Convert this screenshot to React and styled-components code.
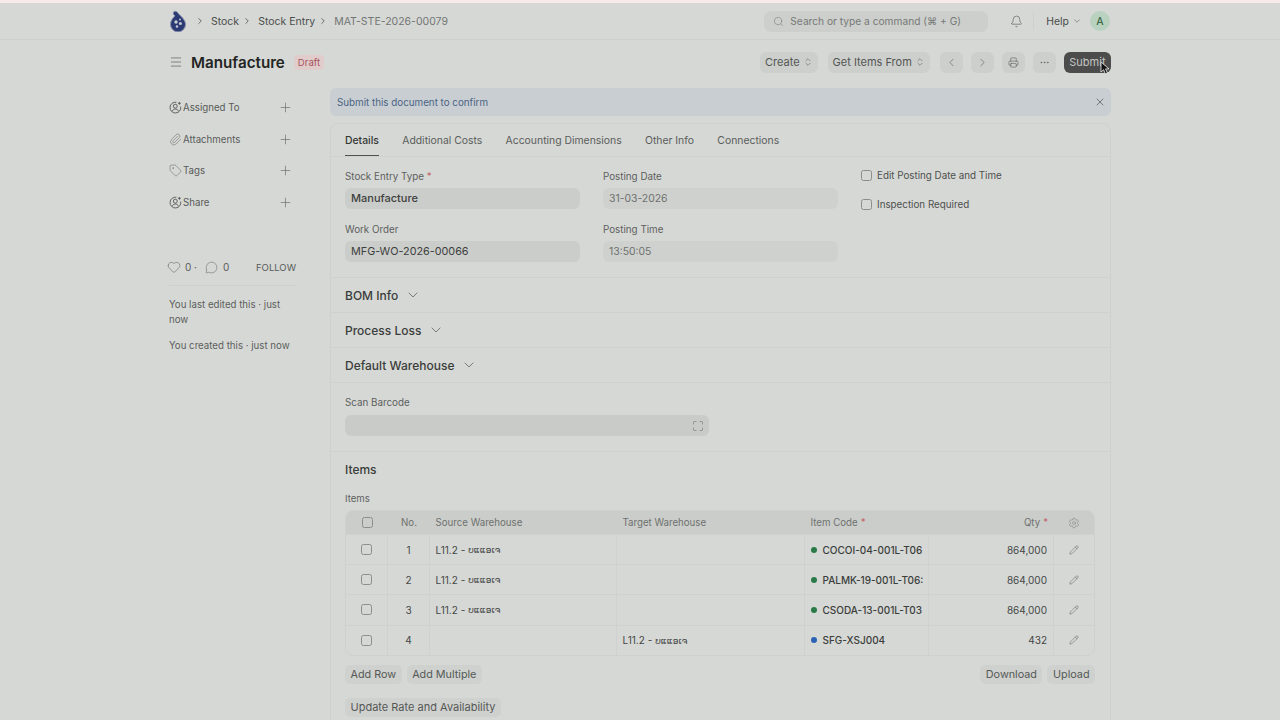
import React from 'react';
import styled, { createGlobalStyle } from 'styled-components';
import { Bell, ChevronDown, ChevronLeft, ChevronRight, ChevronsUpDown, Ellipsis, Heart, Maximize, Menu, MessageCircle, Paperclip, Pencil, Plus, Printer, Search, Settings, Tag, X } from 'lucide-react';

const Global = createGlobalStyle`
  html, body { margin: 0; padding: 0; background: #d6d8d5; height: 720px; overflow: hidden; }
  body { font-family: Inter, "Liberation Sans", "DejaVu Sans", sans-serif; color: #3f4240; -webkit-font-smoothing: antialiased; }
  * { box-sizing: border-box; }
`;
const Page = styled.div`height: 720px; overflow: hidden; border-top: 3px solid #f8e9ea;`;
const Navbar = styled.header`height: 37px; border-bottom: 1px solid #cdd0cd; display: flex; justify-content: center;`;
const Container = styled.div`width: 960px; padding: 0 9px; display: flex; align-items: center;`;
const Logo = styled.svg`width: 18px; height: 22px; margin-right: 8px; flex: none;`;
const Crumb = styled.span`font-size: 10.5px; color: ${p => p.$dim ? '#737674' : '#4b4e4c'}; margin: 0 3px 0 6px;`;
const Spacer = styled.div`flex: 1;`;
const SearchBox = styled.div`width: 224px; height: 21px; border-radius: 7px; background: #cdcfcc; display: flex; align-items: center; gap: 6px; padding: 0 9px; font-size: 10.2px; white-space: nowrap; color: #767977;`;
const NavIcon = styled.div`display: flex; margin-left: 22px; color: #505351;`;
const NavDivider = styled.div`width: 1px; height: 18px; background: #cdd0cd; margin: 0 12px 0 10px;`;
const HelpText = styled.div`font-size: 10.4px; color: #484b49; display: flex; align-items: center; gap: 3px;`;
const Avatar = styled.div`width: 20px; height: 20px; border-radius: 50%; background: #b9d2bf; color: #3d6b4a; font-size: 10.4px; font-weight: 500; display: flex; align-items: center; justify-content: center; margin: 0 1px 0 8px;`;
const PageHead = styled.div`height: 44px; display: flex; justify-content: center;`;
const Title = styled.h1`font-size: 15.2px; font-weight: 600; color: #232523; margin: 0 0 0 8px;`;
const Badge = styled.span`font-size: 9.6px; color: #a8545c; background: #e0cccb; border-radius: 4px; padding: 2px 4px; margin-left: 9px;`;
const Btn = styled.button`height: 21px; border: 0; border-radius: 6px; background: ${p => p.$dark ? '#4b4c4b' : '#cdcfcc'}; color: ${p => p.$dark ? '#c5c7c5' : '#535654'}; font: 400 11px Inter, sans-serif; display: flex; align-items: center; gap: 3px; padding: ${p => p.$icon ? '0' : p.$dark ? '0 5.5px' : '0 5px'}; margin-left: ${p => p.$gap || 8}px; ${p => p.$icon && 'width: 23px; justify-content: center;'} white-space: nowrap; position: relative;`;
const Cursor = styled.svg`position: absolute; right: 0; top: 9px; width: 11px; height: 14px;`;
const Body = styled.div`display: flex; justify-content: center; align-items: flex-start;`;
const Layout = styled.div`width: 960px; padding-left: 9px; display: flex;`;
const Side = styled.aside`width: 161px; flex: none; padding-top: 8px;`;
const SideRow = styled.div`height: 31.5px; width: 124px; display: flex; align-items: center; font-size: 9.7px; color: #585b59;`;
const IconSlot = styled.span`width: 14px; display: flex; flex: none; color: #585b59;`;
const SideLabel = styled.span`flex: 1;`;
const SideStats = styled.div`width: 127px; margin-top: 42px; padding-bottom: 11px; border-bottom: 1px solid #cdd0cd; display: flex; align-items: center; gap: 3px; font-size: 10px; color: #585b59;`;
const LikeIcon = styled(Heart)`margin: 0 1px 0 -2px;`;
const CommentIcon = styled(MessageCircle)`margin: 0 2px 0 5px;`;
const Follow = styled.span`margin-left: auto; font-size: 9.5px; color: #585b59;`;
const Note = styled.p`width: 127px; margin: 11px 0 0; font-size: 9.7px; line-height: 15px; color: #5c5f5d;`;
const Main = styled.main`width: 781px; flex: none;`;
const Alert = styled.div`height: 28px; border-radius: 6px; background: #c9ced2; color: #4a6484; font-size: 9.8px; display: flex; align-items: center; justify-content: space-between; padding: 0 5px 0 7px; margin-top: 4px;`;
const Card = styled.div`margin-top: 7px; border: 1px solid #cfd1ce; border-bottom: 0; border-radius: 8px 8px 0 0; height: 600px;`;
const Tabs = styled.div`height: 33px; padding: 0 14px; display: flex; gap: 23.3px; border-bottom: 1px solid #cfd1ce;`;
const Tab = styled.div`height: 32px; font-size: 10.4px; line-height: 33px; color: ${p => p.$on ? '#333634' : '#5a5d5b'}; font-weight: ${p => p.$on ? 500 : 400}; ${p => p.$on && 'border-bottom: 1px solid #4f5250;'}`;
const FormGrid = styled.div`display: grid; grid-template-columns: 235px 235px 1fr; column-gap: 23px; padding: 12px 14px 0; height: 121px; border-bottom: 1px solid #cfd1ce;`;
const Col = styled.div`display: flex; flex-direction: column;`;
const Label = styled.label`font-size: 9.8px; line-height: 16px; color: #5d605e; height: 19px; display: block; span { color: #c2636b; }`;
const Field = styled.div`height: 21px; border-radius: 6px; background: #cbcdca; font-size: ${p => p.$mute ? 10.4 : p.$bold ? 11 : 10.8}px; line-height: 21px; padding: 0 6px; color: ${p => p.$mute ? '#6d706e' : '#3d403e'}; font-weight: ${p => p.$bold ? 500 : 400}; margin-bottom: ${p => p.$mb || 0}px;`;
const FadedField = styled(Field)`background: #cfd1ce;`;
const Check = styled.div`display: flex; align-items: center; gap: 5px; font-size: 9.8px; color: #4d504e; height: 29px; margin-top: ${p => p.$mt || 0}px;`;
const Box = styled.span`width: 11px; height: 11px; border: 1px solid #8b8e8c; border-radius: 2.5px; display: inline-block; flex: none;`;
const Section = styled.div`height: 35px; padding: 0 14px; border-bottom: 1px solid #cfd1ce; display: flex; align-items: center; gap: 7px; font-size: 12px; font-weight: 500; color: #3a3d3b;`;
const ScanArea = styled.div`height: 69px; padding: 12px 14px 0; border-bottom: 1px solid #cfd1ce;`;
const ScanField = styled.div`width: 364px; height: 21px; margin-top: 1px; border-radius: 6px; background: #c9cbc8; display: flex; align-items: center; justify-content: flex-end; padding-right: 5px; color: #585b59;`;
const ItemsArea = styled.div`padding: 10px 14px 0;`;
const ItemsTitle = styled.div`font-size: 12px; font-weight: 500; color: #3a3d3b; height: 31px;`;
const ItemsLabel = styled.div`font-size: 9.6px; color: #5d605e; height: 17px;`;
const Table = styled.div`width: 750px; border: 1px solid #cfd1ce; border-radius: 8px; overflow: hidden;`;
const Row = styled.div`display: grid; grid-template-columns: 42px 42px 187px 188px 124px 125px 40px; height: ${p => p.$head ? 23 : 30.2}px; background: ${p => p.$head ? '#cbcdca' : 'transparent'}; ${p => !p.$head && 'border-top: 1px solid #cfd1ce;'} font-size: ${p => p.$head ? 9.7 : 10}px; color: ${p => p.$head ? '#6e716f' : '#444745'};`;
const Cell = styled.div`display: flex; align-items: center; justify-content: ${p => p.$c ? 'center' : p.$r ? 'flex-end' : 'flex-start'}; padding: ${p => p.$c ? '0' : '0 6px 0 5.5px'}; white-space: nowrap; overflow: hidden; ${p => !p.$last && !p.$head && 'border-right: 1px solid #cfd1ce;'}`;
const LaoName = styled.span`font-size: 9px; margin-left: 3px;`;
const Dot = styled.span`width: 6px; height: 6px; border-radius: 50%; background: ${p => p.$c}; margin-right: 6px; flex: none;`;
const Code = styled.span`font-weight: 500; color: #3b3e3c; font-size: 10px;`;
const Req = styled.span`color: #c2636b; margin-left: 3px;`;
const Actions = styled.div`display: flex; gap: 5px; margin-top: 9px; width: 750px;`;
const SmallBtn = styled.button`height: 19px; border: 0; border-radius: 5px; background: #cfd1ce; color: #555856; font: 400 ${p => p.$wide ? 11 : 10.8}px Inter, sans-serif; padding: 0 5.5px; margin-left: ${p => p.$auto ? 'auto' : 0};`;
const LastActions = styled(Actions)`margin-top: 14px;`;

const rows = [
  ['1', true, false, 'COCOI-04-001L-T06', '864,000', '#2a7a48'],
  ['2', true, false, 'PALMK-19-001L-T06:', '864,000', '#2a7a48'],
  ['3', true, false, 'CSODA-13-001L-T03', '864,000', '#2a7a48'],
  ['4', false, true, 'SFG-XSJ004', '432', '#2b62b5'],
];
const Warehouse = () => <>L11.2 - <LaoName>ບແແອເຈ</LaoName></>;
const AssignIcon = () => (
  <svg width="13" height="13" viewBox="0 0 14 14" fill="none" stroke="#585b59" strokeWidth="1">
    <path d="M12.6 6a5.8 5.8 0 1 1-4.6-4.6" /><circle cx="6.8" cy="5.6" r="2.1" /><path d="M3.3 11.1c.8-1.6 2-2.4 3.5-2.4s2.7.8 3.5 2.4" /><path d="M11.2 1v3M9.7 2.5h3" />
  </svg>
);
const Add = () => <Plus size={15} strokeWidth={0.9} color="#555856" />;
const Down = () => <ChevronDown size={16} strokeWidth={0.9} />;

export default function App() {
  return (
    <Page>
      <Global />
      <Navbar>
        <Container>
          <Logo viewBox="0 0 18 22">
            <path d="M6 1.2c2 0 2.6 1.4 3.6 2.6 2.2 2.6 6.9 6 6.9 10.6a7.5 7.5 0 0 1-15 0c0-4 2.7-6.5 4.4-8.6C4.7 5 4 4 4.4 2.6 4.7 1.7 5.3 1.2 6 1.2Z" fill="#2c3a74" stroke="#8c91ad" strokeWidth="1" />
            <circle cx="7" cy="12" r="1.7" fill="#c9ced6" /><circle cx="11.4" cy="13.6" r="1.5" fill="#c9ced6" /><circle cx="8" cy="16.5" r="1.2" fill="#c9ced6" /><circle cx="11" cy="9.5" r=".9" fill="#c9ced6" />
          </Logo>
          <ChevronRight size={10} color="#555" /><Crumb>Stock</Crumb>
          <ChevronRight size={10} color="#555" /><Crumb>Stock Entry</Crumb>
          <ChevronRight size={10} color="#555" /><Crumb $dim>MAT-STE-2026-00079</Crumb>
          <Spacer />
          <SearchBox><Search size={11} strokeWidth={1.2} />Search or type a command (⌘ + G)</SearchBox>
          <NavIcon><Bell size={13} strokeWidth={1.1} /></NavIcon>
          <NavDivider />
          <HelpText>Help <ChevronDown size={10} strokeWidth={1.2} /></HelpText>
          <Avatar>A</Avatar>
        </Container>
      </Navbar>
      <PageHead>
        <Container>
          <Menu size={14} strokeWidth={1.1} color="#505351" />
          <Title>Manufacture</Title>
          <Badge>Draft</Badge>
          <Spacer />
          <Btn>Create <ChevronsUpDown size={10} strokeWidth={1.3} /></Btn>
          <Btn $gap={10}>Get Items From <ChevronsUpDown size={10} strokeWidth={1.3} /></Btn>
          <Btn $icon $gap={10}><ChevronLeft size={13} strokeWidth={1.1} /></Btn>
          <Btn $icon><ChevronRight size={13} strokeWidth={1.1} /></Btn>
          <Btn $icon><Printer size={11} strokeWidth={1.2} /></Btn>
          <Btn $icon><Ellipsis size={11} strokeWidth={1.2} /></Btn>
          <Btn $dark>Submit
            <Cursor viewBox="0 0 11 14"><path d="M1 1v10l2.6-2.3L5.4 13l2-.9-1.8-4.2H9Z" fill="#111" stroke="#eee" strokeWidth=".8" /></Cursor>
          </Btn>
        </Container>
      </PageHead>
      <Body>
        <Layout>
          <Side>
            <SideRow><IconSlot><AssignIcon /></IconSlot><SideLabel>Assigned To</SideLabel><Add /></SideRow>
            <SideRow><IconSlot><Paperclip size={13} strokeWidth={0.9} /></IconSlot><SideLabel>Attachments</SideLabel><Add /></SideRow>
            <SideRow><IconSlot><Tag size={13} strokeWidth={0.9} /></IconSlot><SideLabel>Tags</SideLabel><Add /></SideRow>
            <SideRow><IconSlot><AssignIcon /></IconSlot><SideLabel>Share</SideLabel><Add /></SideRow>
            <SideStats><LikeIcon size={14} strokeWidth={0.9} /> 0 · <CommentIcon size={13} strokeWidth={0.9} /> 0<Follow>FOLLOW</Follow></SideStats>
            <Note>You last edited this · just now</Note>
            <Note>You created this · just now</Note>
          </Side>
          <Main>
            <Alert>Submit this document to confirm <X size={12} strokeWidth={1.2} color="#3b3e3c" /></Alert>
            <Card>
              <Tabs>
                <Tab $on>Details</Tab><Tab>Additional Costs</Tab><Tab>Accounting Dimensions</Tab><Tab>Other Info</Tab><Tab>Connections</Tab>
              </Tabs>
              <FormGrid>
                <Col>
                  <Label>Stock Entry Type <span>*</span></Label>
                  <Field $bold $mb={13}>Manufacture</Field>
                  <Label>Work Order</Label>
                  <Field>MFG-WO-2026-00066</Field>
                </Col>
                <Col>
                  <Label>Posting Date</Label>
                  <FadedField $mute $mb={13}>31-03-2026</FadedField>
                  <Label>Posting Time</Label>
                  <FadedField $mute>13:50:05</FadedField>
                </Col>
                <Col>
                  <Check $mt={-8}><Box />Edit Posting Date and Time</Check>
                  <Check><Box />Inspection Required</Check>
                </Col>
              </FormGrid>
              <Section>BOM Info <Down /></Section>
              <Section>Process Loss <Down /></Section>
              <Section>Default Warehouse <Down /></Section>
              <ScanArea>
                <Label>Scan Barcode</Label>
                <ScanField><Maximize size={12} strokeWidth={1} /></ScanField>
              </ScanArea>
              <ItemsArea>
                <ItemsTitle>Items</ItemsTitle>
                <ItemsLabel>Items</ItemsLabel>
                <Table>
                  <Row $head>
                    <Cell $c $head><Box /></Cell><Cell $c $head>No.</Cell><Cell $head>Source Warehouse</Cell><Cell $head>Target Warehouse</Cell>
                    <Cell $head>Item Code<Req>*</Req></Cell><Cell $r $head>Qty<Req>*</Req></Cell><Cell $c $head $last><Settings size={12} strokeWidth={0.9} /></Cell>
                  </Row>
                  {rows.map(r => (
                    <Row key={r[0]}>
                      <Cell $c><Box /></Cell><Cell $c>{r[0]}</Cell><Cell>{r[1] && <Warehouse />}</Cell><Cell>{r[2] && <Warehouse />}</Cell>
                      <Cell><Dot $c={r[5]} /><Code>{r[3]}</Code></Cell><Cell $r>{r[4]}</Cell><Cell $c $last><Pencil size={10} strokeWidth={1} /></Cell>
                    </Row>
                  ))}
                </Table>
                <Actions>
                  <SmallBtn>Add Row</SmallBtn><SmallBtn>Add Multiple</SmallBtn>
                  <SmallBtn $auto>Download</SmallBtn><SmallBtn>Upload</SmallBtn>
                </Actions>
                <LastActions><SmallBtn $wide>Update Rate and Availability</SmallBtn></LastActions>
              </ItemsArea>
            </Card>
          </Main>
        </Layout>
      </Body>
    </Page>
  );
}
